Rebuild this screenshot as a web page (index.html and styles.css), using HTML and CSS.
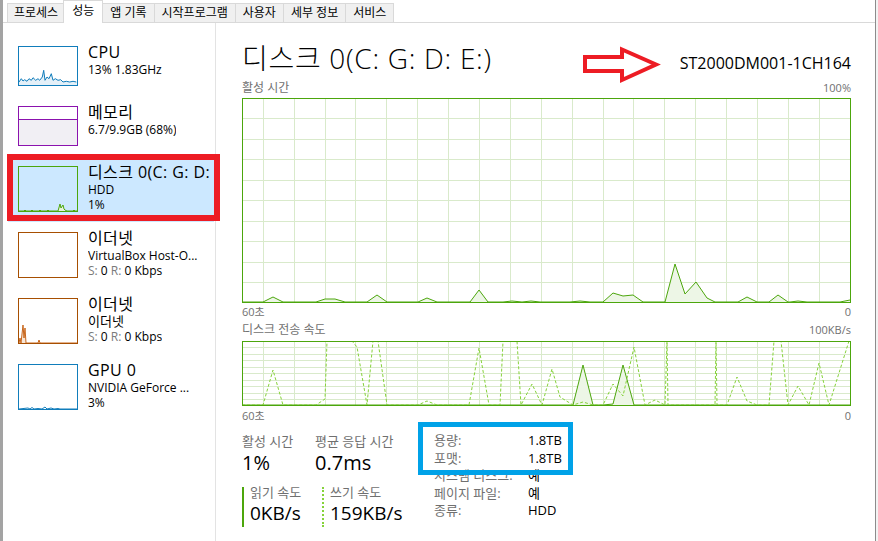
FILE: index.html
```html
<!DOCTYPE html>
<html lang="ko">
<head>
    <meta charset="UTF-8">
    <meta name="viewport" content="width=device-width, initial-scale=1.0">
    <title>작업 관리자</title>
    <link rel="stylesheet" href="styles.css">
</head>
<body>

<div class="window">
    <div class="edge-left"></div>

    <div class="app">
        <div class="tabs">
            <span class="tab">프로세스</span>
            <span class="tab active">성능</span>
            <span class="tab">앱 기록</span>
            <span class="tab">시작프로그램</span>
            <span class="tab">사용자</span>
            <span class="tab">세부 정보</span>
            <span class="tab">서비스</span>
        </div>

        <div class="body">
            <div class="sidebar">
                <div class="item">
                    <svg class="thumb" width="60" height="40" viewBox="0 0 60 40">
                        <polygon fill="#e4f0f8" points="1,39 1,36 3.3,32.7 5,35 6.7,33.7 9,35.3 11,32.7 13.3,34.3 15,31.7 17.7,34.3 20,32.7 21.7,34.3 24.3,31 25.7,24.3 27,34.3 29,31 31,32.7 33.3,27.7 35,34.3 37.3,32.7 40,34.3 42.7,33.7 45,36 48.3,35.3 51.7,36 55,35.3 58.3,36 59,39"/>
                        <polyline fill="none" stroke="#117dbb" points="1,36 3.3,32.7 5,35 6.7,33.7 9,35.3 11,32.7 13.3,34.3 15,31.7 17.7,34.3 20,32.7 21.7,34.3 24.3,31 25.7,24.3 27,34.3 29,31 31,32.7 33.3,27.7 35,34.3 37.3,32.7 40,34.3 42.7,33.7 45,36 48.3,35.3 51.7,36 55,35.3 58.3,36"/>
                        <rect x="0.5" y="0.5" width="59" height="39" fill="none" stroke="#117dbb"/>
                    </svg>
                    <div class="info">
                        <div class="name">CPU</div>
                        <div class="sub">13% 1.83GHz</div>
                    </div>
                </div>

                <div class="item">
                    <svg class="thumb" width="60" height="40" viewBox="0 0 60 40">
                        <rect x="0.5" y="13.5" width="59" height="26" fill="#f1eff4"/>
                        <line x1="0" y1="13.5" x2="60" y2="13.5" stroke="#8b12ae"/>
                        <rect x="0.5" y="0.5" width="59" height="39" fill="none" stroke="#8b12ae"/>
                    </svg>
                    <div class="info">
                        <div class="name">메모리</div>
                        <div class="sub">6.7/9.9GB (68%)</div>
                    </div>
                </div>

                <div class="item tall selected">
                    <svg class="thumb" width="60" height="46" viewBox="0 0 60 46">
                        <polygon fill="#e6f2dc" points="40,45 42,38 43,42 45,39 46,43 47,45"/>
                        <polyline fill="none" stroke="#4ca60c" points="1,45 6,45 7,44 8,45 13,45 14,44 15,45 21,45 22,44 23,45 29,45 30,44 31,45 40,45 42,38 43,42 45,39 46,43 47,44 49,45 55,45 56,44 57,45 59,45"/>
                        <rect x="0.5" y="0.5" width="59" height="45" fill="none" stroke="#4ca60c"/>
                    </svg>
                    <div class="info">
                        <div class="name">디스크 0(C: G: D: E:)</div>
                        <div class="sub">HDD</div>
                        <div class="sub">1%</div>
                    </div>
                </div>

                <div class="item tall">
                    <svg class="thumb" width="60" height="46" viewBox="0 0 60 46">
                        <rect x="0.5" y="0.5" width="59" height="45" fill="#fff" stroke="#a74f01"/>
                    </svg>
                    <div class="info">
                        <div class="name">이더넷</div>
                        <div class="sub">VirtualBox Host-O...</div>
                        <div class="sub"><span class="dim">S:</span> 0 <span class="dim">R:</span> 0 Kbps</div>
                    </div>
                </div>

                <div class="item tall">
                    <svg class="thumb" width="60" height="46" viewBox="0 0 60 46">
                        <polygon fill="#f7e6d6" points="1,45 2,40 3,45 4,36 5,27 6,40 7,30 8,45 20,45 21,42 22,45"/>
                        <polyline fill="none" stroke="#c8661c" points="1,45 2,40 3,45 4,36 5,27 6,40 7,30 8,45 20,45 21,42 22,45 59,45"/>
                        <rect x="0.5" y="0.5" width="59" height="45" fill="none" stroke="#a74f01"/>
                    </svg>
                    <div class="info">
                        <div class="name">이더넷</div>
                        <div class="sub ko">이더넷</div>
                        <div class="sub"><span class="dim">S:</span> 0 <span class="dim">R:</span> 0 Kbps</div>
                    </div>
                </div>

                <div class="item tall">
                    <svg class="thumb" width="60" height="46" viewBox="0 0 60 46">
                        <polyline fill="none" stroke="#117dbb" points="1,45 10,44 12,45 14,43.5 16,45 20,44.5 24,45 27,43 29,45 33,44 36,45 40,44.5 42,45 59,45"/>
                        <rect x="0.5" y="0.5" width="59" height="45" fill="none" stroke="#117dbb"/>
                    </svg>
                    <div class="info">
                        <div class="name">GPU 0</div>
                        <div class="sub">NVIDIA GeForce ...</div>
                        <div class="sub">3%</div>
                    </div>
                </div>
            </div>

            <div class="detail">
                <div class="head">
                    <span class="title">디스크 0(C: G: D: E:)</span>
                    <span class="model">ST2000DM001-1CH164</span>
                </div>

                <div class="axis top-axis">
                    <span class="axis-name">활성 시간</span>
                    <span>100%</span>
                </div>
                <svg class="chart" width="609" height="205" viewBox="0 0 609 205">
                    <path stroke="#d9eacb" fill="none" d="M21.5 0V205M52.5 0V205M83.5 0V205M113.5 0V205M144.5 0V205M175.5 0V205M206.5 0V205M237.5 0V205M268.5 0V205M299.5 0V205M330.5 0V205M361.5 0V205M391.5 0V205M422.5 0V205M453.5 0V205M484.5 0V205M515.5 0V205M546.5 0V205M577.5 0V205M0 20.5H609M0 41.5H609M0 61.5H609M0 82.5H609M0 102.5H609M0 123.5H609M0 143.5H609M0 164.5H609M0 184.5H609"/>
                    <polygon fill="#edf6e6" points="0,204 21,204 31,199 41,204 74,204 83,201 93,201 103,204 125,204 135,197 145,204 176,204 185,200 195,204 228,204 237,192 246,204 261,204 270,203 280,204 289,203 298,204 328,204 338,203 348,204 361,204 371,195 381,198 391,197 401,204 423,204 433,166 443,196 454,184 465,200 473,204 496,204 505,199 515,204 527,204 536,197 546,204 548,204 556,203 565,204 598,204 608,202 608,204"/>
                    <polyline fill="none" stroke="#4ca60c" points="0,204 21,204 31,199 41,204 74,204 83,201 93,201 103,204 125,204 135,197 145,204 176,204 185,200 195,204 228,204 237,192 246,204 261,204 270,203 280,204 289,203 298,204 328,204 338,203 348,204 361,204 371,195 381,198 391,197 401,204 423,204 433,166 443,196 454,184 465,200 473,204 496,204 505,199 515,204 527,204 536,197 546,204 548,204 556,203 565,204 598,204 608,202"/>
                    <rect x="0.5" y="0.5" width="608" height="204" fill="none" stroke="#4ca60c"/>
                </svg>
                <div class="axis first-foot">
                    <span>60초</span>
                    <span>0</span>
                </div>

                <div class="axis second-axis">
                    <span class="axis-name">디스크 전송 속도</span>
                    <span>100KB/s</span>
                </div>
                <svg class="chart second-chart" width="609" height="65" viewBox="0 0 609 65">
                    <path stroke="#d9eacb" fill="none" d="M21.5 0V65M52.5 0V65M83.5 0V65M113.5 0V65M144.5 0V65M175.5 0V65M206.5 0V65M237.5 0V65M268.5 0V65M299.5 0V65M330.5 0V65M361.5 0V65M391.5 0V65M422.5 0V65M453.5 0V65M484.5 0V65M515.5 0V65M546.5 0V65M577.5 0V65M0 6.5H609M0 13.5H609M0 19.5H609M0 26.5H609M0 32.5H609M0 39.5H609M0 45.5H609M0 52.5H609M0 58.5H609"/>
                    <polygon fill="#edf6e6" points="331,64 341,24 351,64 361,64 371,63 381,24 392,64"/>
                    <polyline fill="none" stroke="#4ca60c" points="0,64 331,64 341,24 351,64 361,64 371,63 381,24 392,64 608,64"/>
                    <polyline fill="none" stroke="#86d23a" stroke-dasharray="3 2" points="0,64 21,64 31,29 41,64 74,64 83,58 85,0 110,0 115,6 125,64 131,0 136,0 145,64 176,64 185,60 195,64 227,64 237,7 247,64 258,64 261,0 275,0 279,64 290,43 300,64 310,28 318,56 331,64 341,61 351,64 361,64 371,43 381,55 392,6 403,64 413,59 423,64 425,0 426,64 473,64 474,0 475,64 485,64 495,36 505,60 515,64 527,64 532,0 539,0 546,64 556,45 567,64 577,22 587,64 607,0"/>
                    <rect x="0.5" y="0.5" width="608" height="64" fill="none" stroke="#4ca60c"/>
                </svg>
                <div class="axis second-foot">
                    <span>60초</span>
                    <span>0</span>
                </div>

                <div class="stats">
                    <div class="stats-left">
                        <div class="stat-row">
                            <div class="stat">
                                <div class="stat-label">활성 시간</div>
                                <div class="stat-value">1%</div>
                            </div>
                            <div class="stat">
                                <div class="stat-label">평균 응답 시간</div>
                                <div class="stat-value">0.7ms</div>
                            </div>
                        </div>
                        <div class="speed-row">
                            <div class="speed">
                                <div class="speed-label">읽기 속도</div>
                                <div class="speed-value">0KB/s</div>
                            </div>
                            <div class="speed write">
                                <div class="speed-label">쓰기 속도</div>
                                <div class="speed-value">159KB/s</div>
                            </div>
                        </div>
                    </div>
                    <div class="props">
                        <span class="prop-label">용량:</span><span>1.8TB</span>
                        <span class="prop-label">포맷:</span><span>1.8TB</span>
                        <span class="prop-label">시스템 디스크:</span><span>예</span>
                        <span class="prop-label">페이지 파일:</span><span>예</span>
                        <span class="prop-label">종류:</span><span>HDD</span>
                    </div>
                </div>
            </div>
        </div>
    </div>

    <div class="edge-right"></div>

    <div class="mark-red"></div>
    <svg class="mark-arrow" width="84" height="42" viewBox="0 0 84 42">
        <path d="M5 13H42V5.5L76 20.5L42 36V27H5Z" fill="none" stroke="#ed1c24" stroke-width="4"/>
    </svg>
    <div class="mark-blue"></div>
</div>

</body>
</html>
```

FILE: styles.css
```css
body {
    margin: 0;
    font-family: "Open Sans", "Noto Sans CJK KR", sans-serif;
    color: #000;
    background: #fff;
}
.window {
    position: relative;
    display: flex;
    width: 878px;
    height: 541px;
    overflow: hidden;
}
.edge-left {
    width: 3px;
    background: #a3a3a3;
}
.edge-right {
    width: 3px;
    border-left: 1px solid #8c8c8c;
    background: #f3f3f3;
    box-sizing: border-box;
}
.app {
    flex: 1;
    display: flex;
    flex-direction: column;
    min-width: 0;
}

/* tabs */
.tabs {
    display: flex;
    align-items: flex-end;
    height: 23px;
    padding-left: 4px;
    border-bottom: 1px solid #d9d9d9;
    box-sizing: border-box;
}
.tab {
    height: 19px;
    padding: 0 7px;
    margin-left: -1px;
    border: 1px solid #d9d9d9;
    border-bottom: none;
    background: #f0f0f0;
    font-size: 12px;
    line-height: 18px;
    white-space: nowrap;
    box-sizing: border-box;
}
.tab:first-child {
    margin-left: 0;
    padding: 0 5px 0 6px;
}
.tab.active {
    position: relative;
    height: 23px;
    margin-bottom: -1px;
    padding: 0 8px;
    background: #fff;
    line-height: 20px;
}

.body {
    flex: 1;
    display: flex;
}

/* left list */
.sidebar {
    width: 212px;
    padding-top: 13px;
    border-right: 1px solid #e3e3e3;
}
.item {
    display: flex;
    gap: 10px;
    height: 60px;
    margin: 0 1px 0 5px;
    padding-left: 10px;
    box-sizing: border-box;
}
.item.tall {
    height: 66px;
}
.item.selected {
    background: #cce8ff;
}
.thumb {
    flex: none;
    margin-top: 10px;
}
.info {
    margin-top: 6px;
    min-width: 0;
    overflow: hidden;
    white-space: nowrap;
}
.name {
    height: 20px;
    font-size: 16px;
    line-height: 20px;
    letter-spacing: 0.4px;
}
.sub {
    height: 15px;
    font-size: 12px;
    line-height: 15px;
}
.sub.ko {
    font-size: 13px;
}
.dim {
    color: #7a7a7a;
}

/* right detail */
.detail {
    flex: 1;
    padding: 0 24px 0 26px;
    min-width: 0;
}
.head {
    display: flex;
    justify-content: space-between;
    align-items: baseline;
    height: 51px;
    padding-top: 19px;
    box-sizing: border-box;
}
.title {
    font-size: 28px;
    font-weight: 300;
    line-height: 32px;
    letter-spacing: 0.7px;
}
.model {
    font-size: 16px;
    line-height: 20px;
}
.axis {
    display: flex;
    justify-content: space-between;
    align-items: baseline;
    height: 14px;
    font-size: 11px;
    line-height: 14px;
    color: #707070;
}
.axis-name {
    font-size: 12px;
}
.top-axis {
    margin-top: 7px;
}
.first-foot {
    margin-top: 2px;
}
.second-axis {
    margin-top: 4px;
}
.second-foot {
    margin-top: 3px;
}
.chart {
    display: block;
    margin-top: 3px;
}
.second-chart {
    margin-top: 4px;
}

.stats {
    display: flex;
}
.stats-left {
    width: 192px;
}
.stat-row {
    display: flex;
}
.stat {
    width: 73px;
}
.stat-label {
    height: 15px;
    margin-top: 11px;
    font-size: 13px;
    line-height: 15px;
    color: #707070;
    white-space: nowrap;
}
.stat-value {
    height: 24px;
    margin-top: 2px;
    font-size: 20px;
    line-height: 24px;
}
.speed-row {
    display: flex;
    margin-top: 12px;
}
.speed {
    width: 80px;
    padding: 0 0 3px 6px;
    border-left: 2px solid #4ca60c;
    box-sizing: border-box;
}
.speed.write {
    border-left: 2px dotted #86d23a;
}
.speed-label {
    height: 11px;
    font-size: 13px;
    line-height: 11px;
    color: #707070;
}
.speed-value {
    height: 22px;
    margin-top: 4px;
    font-size: 19px;
    line-height: 22px;
}
.props {
    display: grid;
    grid-template-columns: 94px auto;
    grid-auto-rows: 17.5px;
    margin-top: 9px;
    font-size: 13px;
    line-height: 17.5px;
}
.prop-label {
    color: #707070;
    white-space: nowrap;
}

/* annotations drawn over the screenshot */
.mark-red {
    position: absolute;
    left: 7px;
    top: 154px;
    width: 213px;
    height: 67px;
    border: 6px solid #ed1c24;
    box-sizing: border-box;
}
.mark-arrow {
    position: absolute;
    left: 580px;
    top: 44px;
}
.mark-blue {
    position: absolute;
    left: 418px;
    top: 422px;
    width: 155px;
    height: 53px;
    border: 5px solid #00a2e8;
    box-sizing: border-box;
}
```
